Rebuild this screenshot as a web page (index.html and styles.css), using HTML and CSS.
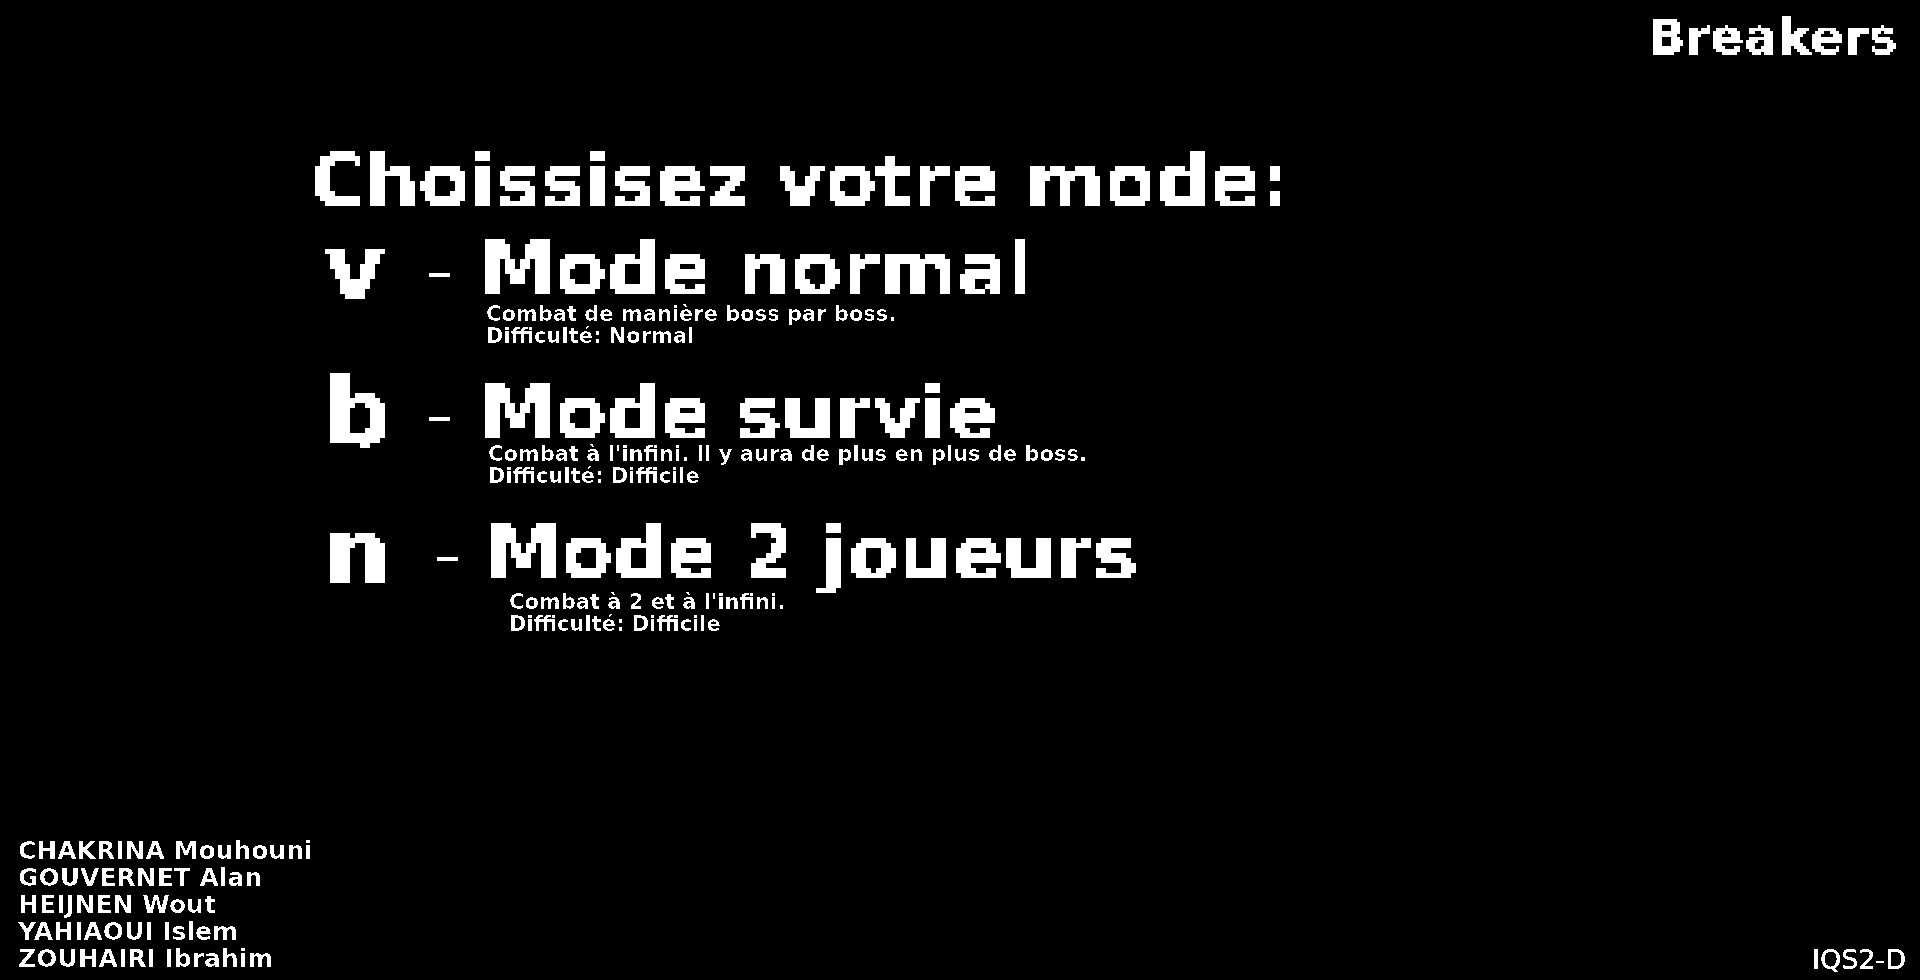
FILE: index.html
```html
<!DOCTYPE html>
<html lang="fr">
<head>
<meta charset="utf-8">
<meta name="viewport" content="width=device-width, initial-scale=1">
<title>Breakers</title>
<link rel="stylesheet" href="styles.css">
</head>
<body>
<svg class="filters" width="0" height="0" aria-hidden="true">
  <filter id="pixel-large" filterUnits="userSpaceOnUse" primitiveUnits="userSpaceOnUse" x="0" y="-10" width="1600" height="120">
    <feFlood x="2" y="2" width="1" height="1" flood-color="#fff" result="seed"/>
    <feOffset in="seed" x="0" y="0" width="5" height="5" dx="0" dy="0" result="cell"/>
    <feTile in="cell" result="grid"/>
    <feComposite in="SourceGraphic" in2="grid" operator="in"/>
    <feComponentTransfer><feFuncA type="discrete" tableValues="0 1"/></feComponentTransfer>
    <feMorphology operator="dilate" radius="2"/>
  </filter>
  <filter id="pixel-medium" filterUnits="userSpaceOnUse" primitiveUnits="userSpaceOnUse" x="0" y="0" width="400" height="80">
    <feFlood x="1" y="1" width="1" height="1" flood-color="#fff" result="seed"/>
    <feOffset in="seed" x="0" y="0" width="3" height="3" dx="0" dy="0" result="cell"/>
    <feTile in="cell" result="grid"/>
    <feComposite in="SourceGraphic" in2="grid" operator="in"/>
    <feComponentTransfer><feFuncA type="discrete" tableValues="0 1"/></feComponentTransfer>
    <feMorphology operator="dilate" radius="1"/>
  </filter>
  <filter id="crisp" x="0" y="0" width="1" height="1">
    <feComponentTransfer><feFuncA type="discrete" tableValues="0 1"/></feComponentTransfer>
  </filter>
  <filter id="crisp-light" x="0" y="0" width="1" height="1">
    <feComponentTransfer><feFuncA type="discrete" tableValues="0 0 0 1"/></feComponentTransfer>
  </filter>
  <filter id="crisp-heavy" x="0" y="0" width="1" height="1">
    <feComponentTransfer><feFuncA type="discrete" tableValues="0 1 1 1 1"/></feComponentTransfer>
  </filter>
</svg>
<header class="header"><span class="brand">Breakers</span></header>
<main class="menu">
  <h1 class="title">Choissisez votre mode:</h1>
  <section class="mode">
    <kbd class="key">v</kbd>
    <span class="dash">–</span>
    <div class="info">
      <h2 class="name">Mode normal</h2>
      <p class="description">Combat de manière boss par boss.<br>Difficulté: Normal</p>
    </div>
  </section>
  <section class="mode">
    <kbd class="key">b</kbd>
    <span class="dash">–</span>
    <div class="info">
      <h2 class="name">Mode survie</h2>
      <p class="description description-close">Combat à l'infini. Il y aura de plus en plus de boss.<br>Difficulté: Difficile</p>
    </div>
  </section>
  <section class="mode mode-duo">
    <kbd class="key">n</kbd>
    <span class="dash">–</span>
    <div class="info">
      <h2 class="name">Mode 2 joueurs</h2>
      <p class="description description-duo">Combat à 2 et à l'infini.<br>Difficulté: Difficile</p>
    </div>
  </section>
</main>
<footer class="footer">
  <ul class="credits">
    <li>CHAKRINA Mouhouni</li>
    <li>GOUVERNET Alan</li>
    <li>HEIJNEN Wout</li>
    <li>YAHIAOUI Islem</li>
    <li>ZOUHAIRI Ibrahim</li>
  </ul>
  <span class="group">IQS2-D</span>
</footer>
</body>
</html>
```
FILE: styles.css
```css
* {
  box-sizing: border-box;
  margin: 0;
  padding: 0;
}

body {
  display: flex;
  flex-direction: column;
  min-height: 100vh;
  background: #000;
  color: #fff;
  font-family: "DejaVu Sans", Verdana, sans-serif;
  font-weight: 700;
}

.filters {
  position: absolute;
}

.header {
  display: flex;
  justify-content: flex-end;
  padding: 10px 22px 0;
}

.brand {
  font-size: 50px;
  line-height: 54px;
  filter: url(#pixel-medium);
}

.menu {
  display: flex;
  flex-direction: column;
  gap: 36px;
  padding: 87px 24px 24px 310px;
}

.title {
  margin-bottom: -8px;
  font-size: 75px;
  line-height: 60px;
  filter: url(#pixel-large);
}

.mode {
  display: grid;
  grid-template-columns: 98px 52px 1fr;
  column-gap: 10px;
}

.mode-duo {
  grid-template-columns: 98px 58px 1fr;
}

.key {
  padding-left: 14px;
  font-family: inherit;
  font-size: 94px;
  line-height: 60px;
  filter: url(#pixel-large);
}

.dash {
  padding-left: 8px;
  font-size: 54px;
  font-weight: 400;
  line-height: 66px;
  filter: url(#crisp);
}

.mode-duo .dash {
  padding-left: 16px;
}

.name {
  font-size: 75px;
  line-height: 60px;
  filter: url(#pixel-large);
}

.description {
  padding: 4px 0 0 6px;
  font-size: 21px;
  line-height: 22px;
  filter: url(#crisp-light);
}

.description-close {
  padding: 0 0 0 8px;
}

.description-duo {
  padding: 8px 0 0 23px;
}

.footer {
  display: flex;
  justify-content: space-between;
  align-items: flex-end;
  margin-top: auto;
  padding: 0 14px 8px 18px;
}

.credits {
  list-style: none;
  font-size: 25px;
  line-height: 27px;
  filter: url(#crisp-light);
}

.group {
  font-size: 27px;
  font-weight: 400;
  line-height: 24px;
  filter: url(#crisp-heavy);
}
```
